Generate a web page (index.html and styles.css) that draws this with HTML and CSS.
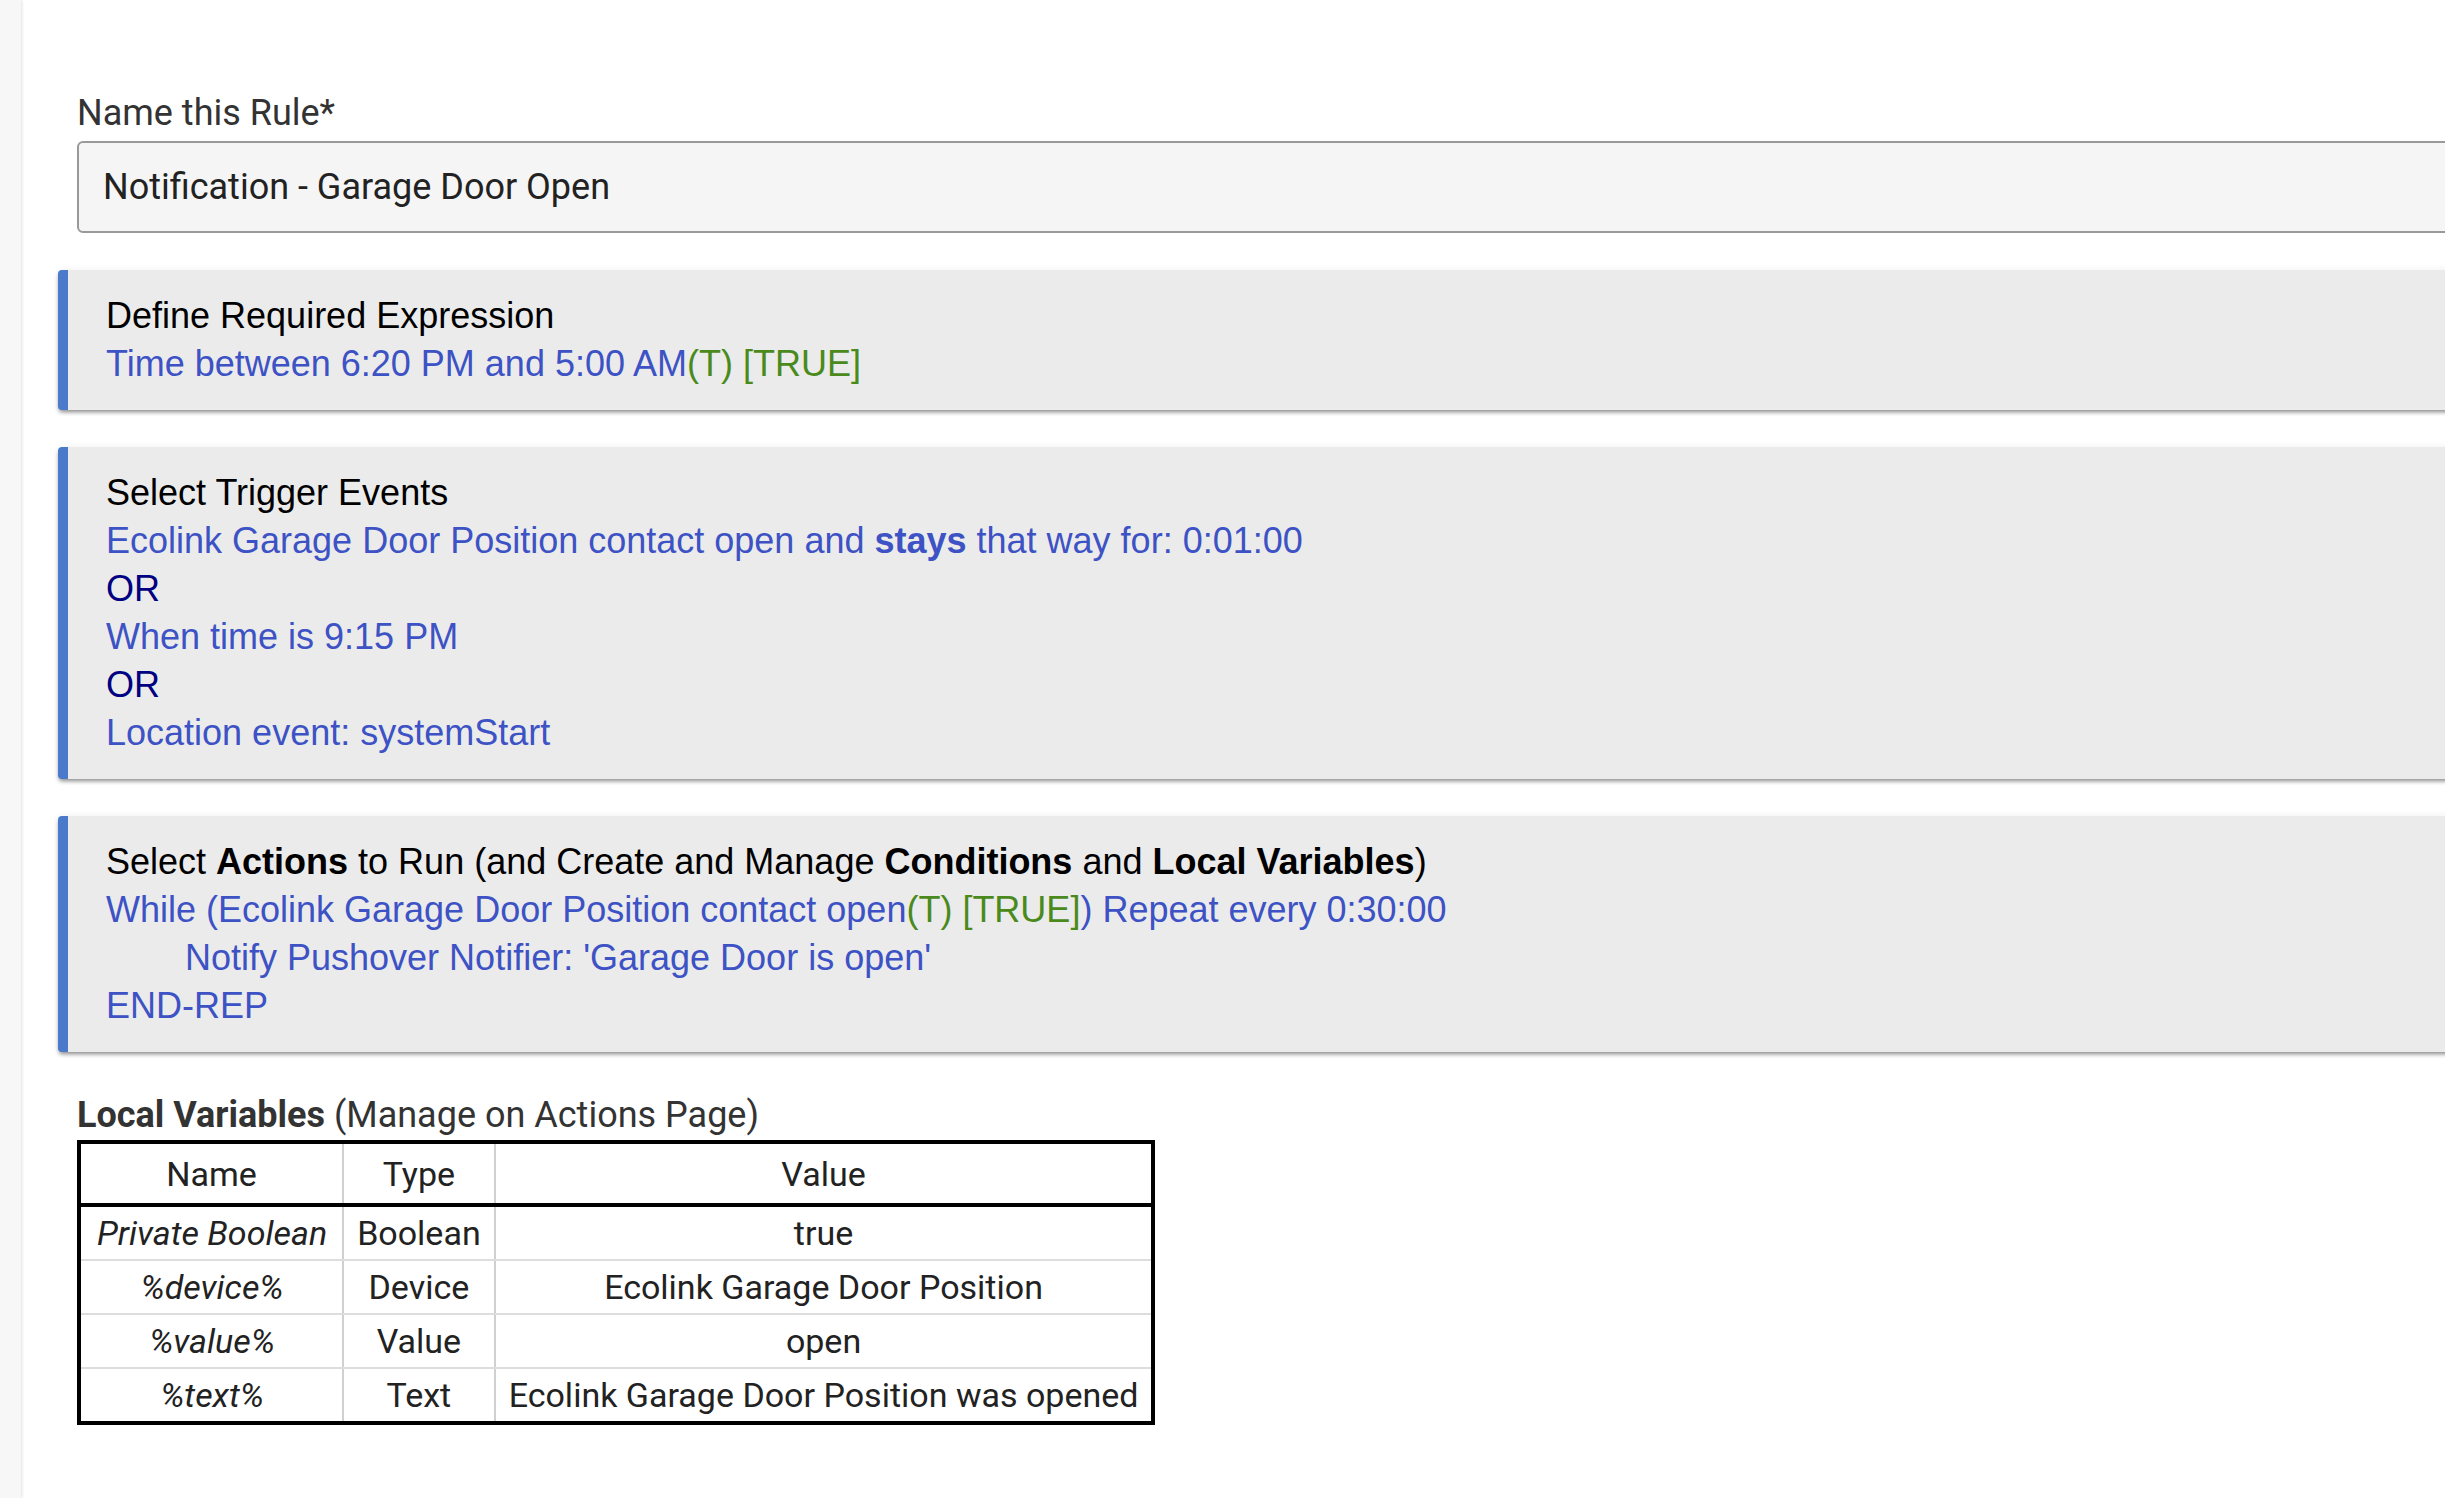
FILE: index.html
```html
<!DOCTYPE html>
<html lang="en">
<head>
    <meta charset="UTF-8">
    <title>Rule Machine</title>
    <link rel="stylesheet" href="styles.css">
</head>
<body>
    <div class="sidebar"></div>

    <div class="main">
        <div class="field">
            <label class="field-label" for="ruleName">Name this Rule*</label>
            <input id="ruleName" class="field-input" type="text" value="Notification - Garage Door Open">
        </div>

        <!-- required expression -->
        <div class="card">
            <div class="card-title">Define Required Expression</div>
            <div class="line">Time between 6:20 PM and 5:00 AM<span class="state">(T) [TRUE]</span></div>
        </div>

        <!-- triggers -->
        <div class="card">
            <div class="card-title">Select Trigger Events</div>
            <div class="line">Ecolink Garage Door Position contact open and <b>stays</b> that way for: 0:01:00</div>
            <div class="line or">OR</div>
            <div class="line">When time is 9:15 PM</div>
            <div class="line or">OR</div>
            <div class="line">Location event: systemStart</div>
        </div>

        <!-- actions -->
        <div class="card">
            <div class="card-title">Select <b>Actions</b> to Run (and Create and Manage <b>Conditions</b> and <b>Local Variables</b>)</div>
            <div class="line">While (Ecolink Garage Door Position contact open<span class="state">(T) [TRUE]</span>) Repeat every 0:30:00</div>
            <div class="line indent">Notify Pushover Notifier: 'Garage Door is open'</div>
            <div class="line">END-REP</div>
        </div>

        <div class="vars">
            <div class="vars-title"><b>Local Variables</b> (Manage on Actions Page)</div>
            <table class="vars-table">
                <thead>
                    <tr><th class="name-col">Name</th><th>Type</th><th>Value</th></tr>
                </thead>
                <tbody>
                    <tr><td class="var-name">Private Boolean</td><td>Boolean</td><td>true</td></tr>
                    <tr><td class="var-name">%device%</td><td>Device</td><td>Ecolink Garage Door Position</td></tr>
                    <tr><td class="var-name">%value%</td><td>Value</td><td>open</td></tr>
                    <tr><td class="var-name">%text%</td><td>Text</td><td>Ecolink Garage Door Position was opened</td></tr>
                </tbody>
            </table>
        </div>
    </div>
</body>
</html>
```

FILE: styles.css
```css
/* page */
body {
    margin: 0;
    background: #fff;
    display: flex;
    min-height: 100vh;
    overflow: hidden;
    font-family: "Liberation Sans", Arial, sans-serif;
}

/* left strip */
.sidebar {
    width: 21px;
    flex-shrink: 0;
    background: #f7f7f7;
    box-shadow: 1px 0 3px rgba(0, 0, 0, 0.12);
}

.main {
    flex: 1;
    padding: 92px 0 0 37px;
    margin-right: -60px;
}

/* rule name */
.field {
    padding-left: 19px;
}

.field-label {
    display: block;
    font-family: Roboto, "Liberation Sans", sans-serif;
    font-size: 36px;
    line-height: 42px;
    color: #333;
    margin-bottom: 7px;
}

.field-input {
    display: block;
    box-sizing: border-box;
    width: 100%;
    height: 92px;
    margin: 0;
    padding: 0 24px;
    border: 2px solid #999;
    border-radius: 6px;
    background: #f5f5f5;
    font-family: Roboto, "Liberation Sans", sans-serif;
    font-size: 36px;
    color: #222;
    outline: none;
}

/* cards */
.card {
    margin-top: 37px;
    padding: 22px 0 22px 38px;
    background: #ebebeb;
    border-left: 10px solid #4a7ac9;
    border-radius: 4px 0 0 4px;
    box-shadow: 0 3px 4px -1px rgba(0, 0, 0, 0.45), 0 0 8px rgba(0, 0, 0, 0.06);
    font-size: 36px;
    line-height: 48px;
}

.card-title {
    color: #000;
}

.line {
    color: #3d52c4;
}

.line.or {
    color: #000080;
}

.line.indent {
    padding-left: 79px;
}

.state {
    color: #4a8a1c;
}

/* local variables */
.vars {
    padding: 42px 0 0 19px;
    font-family: Roboto, "Liberation Sans", sans-serif;
}

.vars-title {
    font-size: 36px;
    line-height: 42px;
    color: #333;
    margin-bottom: 4px;
}

.vars-title b {
    font-weight: 700;
}

.vars-table {
    border-collapse: collapse;
    border: 4px solid #000;
    font-size: 34px;
    color: #222;
}

.vars-table th {
    font-weight: 400;
    padding: 9px 14px 8px;
    line-height: 42px;
    border-bottom: 4px solid #000;
    border-right: 2px solid #d0d0d0;
}

.vars-table td {
    text-align: center;
    padding: 5px 13px 5px;
    line-height: 42px;
    border-right: 2px solid #d0d0d0;
    border-bottom: 2px solid #ddd;
}

.vars-table .var-name {
    font-style: italic;
    padding: 5px 15px 5px 16px;
}
```
